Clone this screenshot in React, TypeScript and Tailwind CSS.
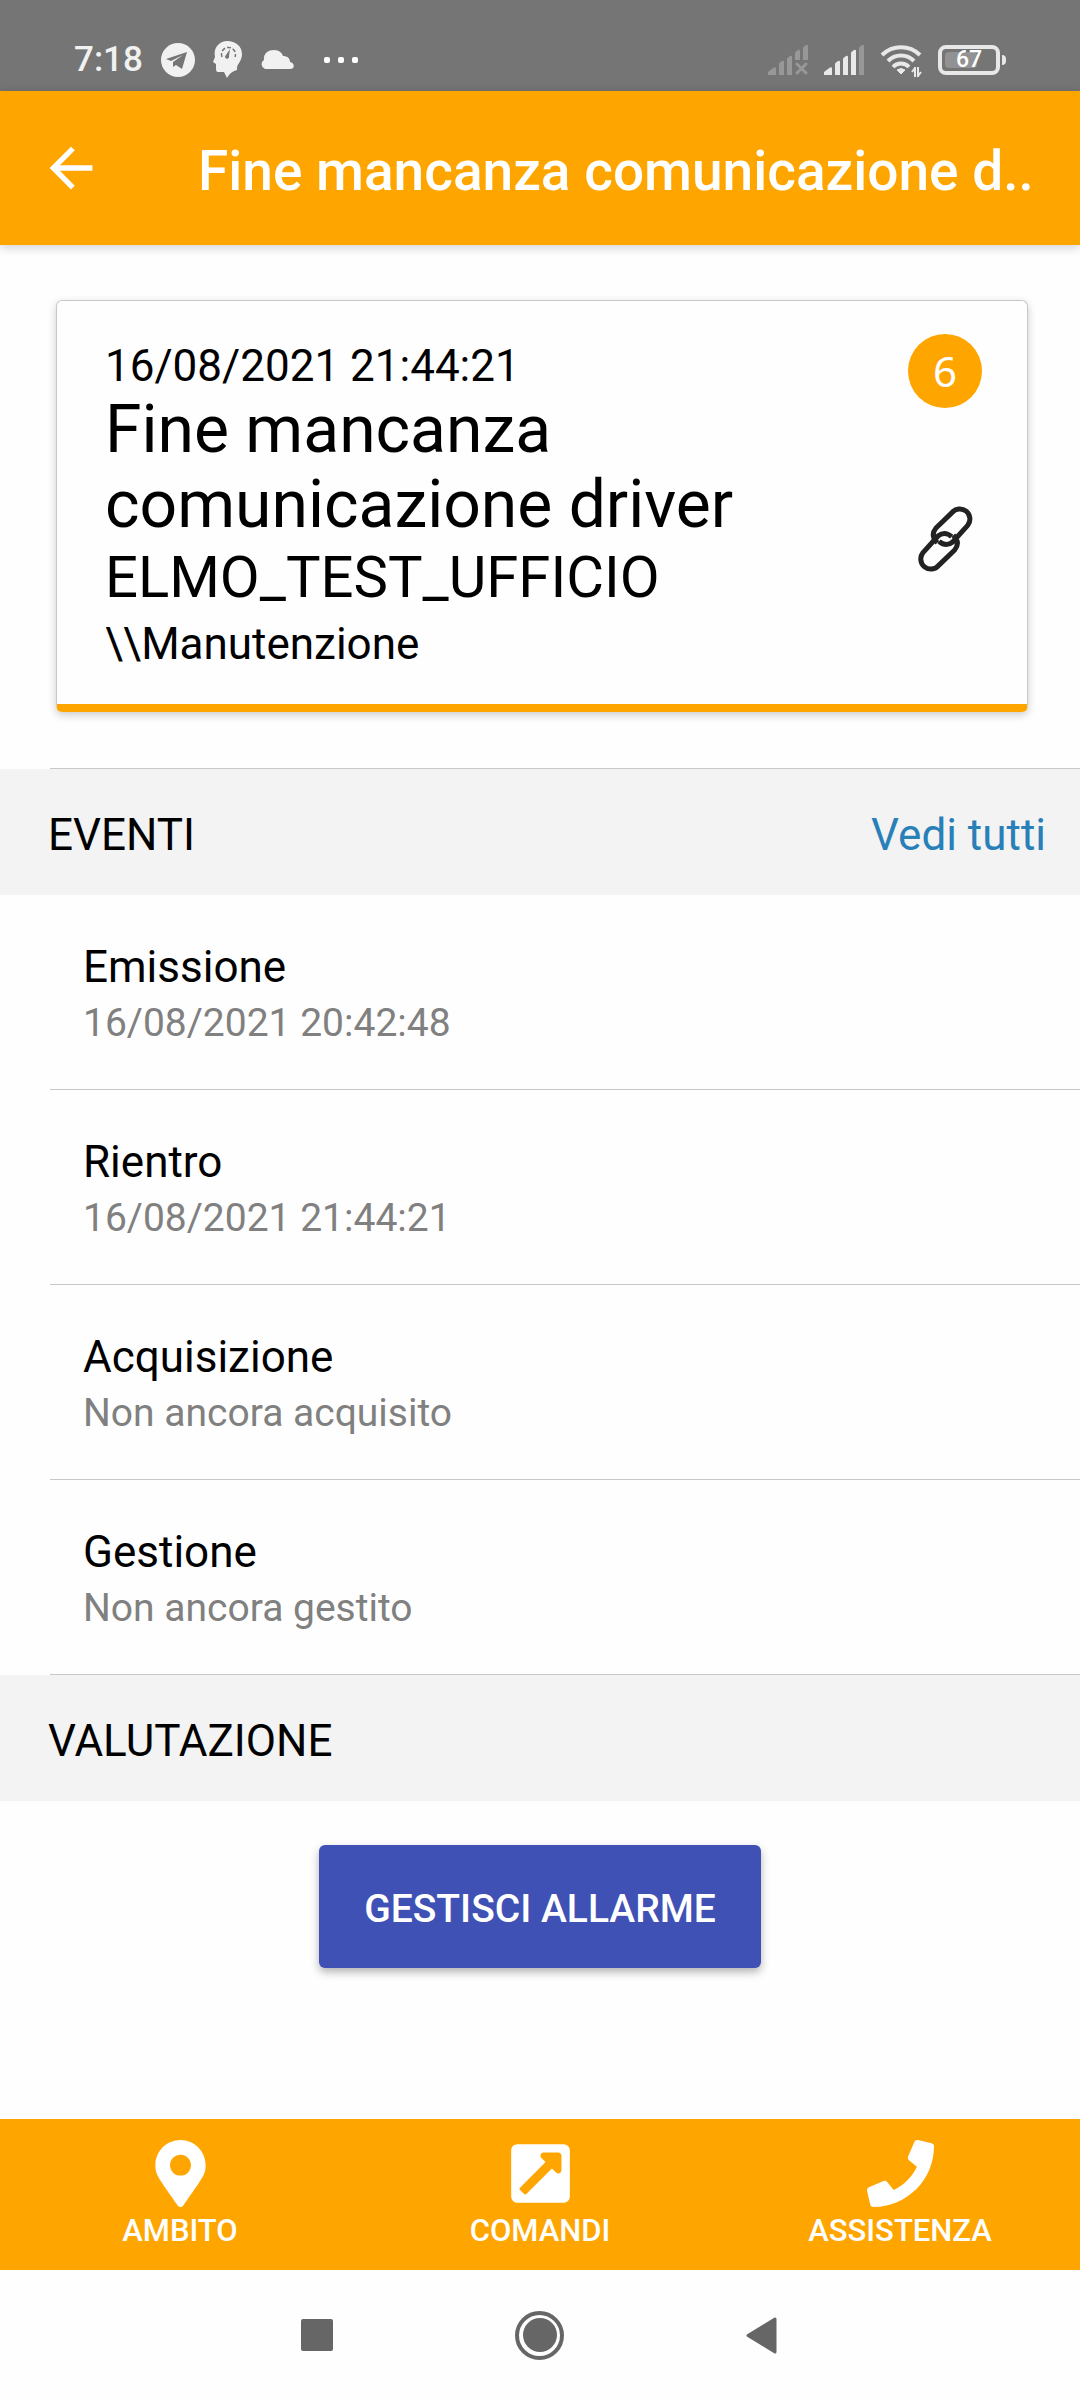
import { ReactNode } from "react";
import { FaExternalLinkSquareAlt, FaMapMarkerAlt, FaPhone } from "react-icons/fa";
import { IoMdArrowBack } from "react-icons/io";

const events = [
	{ label: "Emissione", value: "16/08/2021 20:42:48" },
	{ label: "Rientro", value: "16/08/2021 21:44:21" },
	{ label: "Acquisizione", value: "Non ancora acquisito" },
	{ label: "Gestione", value: "Non ancora gestito" },
];

const tabs = [
	{ label: "AMBITO", href: "#ambito", Icon: FaMapMarkerAlt },
	{ label: "COMANDI", href: "#comandi", Icon: FaExternalLinkSquareAlt },
	{ label: "ASSISTENZA", href: "#assistenza", Icon: FaPhone },
];

function SignalBars({ missing = false }: { missing?: boolean }) {
	return (
		<svg className="h-[30px] w-[40px]" viewBox="0 0 40 30" fill="#e8e8e8">
			<g opacity={missing ? 0.3 : 1}>
				<path d="M0 30v-3l6-4.500q2-1 2 1V30z" />
				<path d="M11 30V19q0-1 1-1.500l2-1.500q2-1 2 1V30z" />
				<path d="M19 30V14q0-1 1-1.500l2-1.500q2-1 2 1v18z" />
				<path d={missing ? "M27 15V8q0-1 1-1.500L30 5q2-1 2 1v9z" : "M27 30V8q0-1 1-1.500L30 5q2-1 2 1v24z"} />
			</g>
			<path
				opacity={0.3}
				d={missing ? "M35 15V3q0-1 1-1.500L38 0q2-1 2 1v14z" : "M35 30V3q0-1 1-1.500L38 0q2-1 2 1v29z"}
			/>
			{missing && (
				<path d="M29 19l9 9m0-9l-9 9" stroke="#e8e8e8" strokeWidth="3" strokeLinecap="round" opacity="0.3" />
			)}
		</svg>
	);
}

function StatusBar() {
	return (
		<div className="flex h-[91px] items-center justify-between bg-[#757575] pt-[28px] pr-[74px] pl-[74px] text-[#f1f1f1]">
			<div className="flex items-center">
				<span className="text-[35px] leading-none font-medium">7:18</span>
				<svg className="ml-[18px] size-[34px]" viewBox="0 0 34 34">
					<circle cx="17" cy="17" r="17" fill="#f1f1f1" />
					<path d="M5 16L26 9l-5 17-6-4-3 2 0-5 10-7-12 6z" fill="#757575" />
				</svg>
				<svg className="ml-[18px] h-[37px] w-[29px]" viewBox="0 0 29 37">
					<path
						d="M14.500 0C22 0 29 5 29 13c0 7-5 10-5 14v2c-4 1-7 3-10 8l-3-6H5q-2 0-2-3v-5l-3-2 2-5C0 7 6 0 14.500 0z"
						fill="#f1f1f1"
					/>
					<path d="M9 16a7 7 0 1 1 13 0" fill="none" stroke="#757575" strokeWidth="1.500" strokeDasharray="4 2" />
					<path d="M17 8l-4 6a2 2 0 1 0 3 1z" fill="#757575" />
				</svg>
				<svg className="ml-[18px] h-[19px] w-[34px]" viewBox="0 0 34 19">
					<path d="M5 19a5 5 0 0 1-1-9C3 4 8 0 14 0c5 0 8 3 9 6 4 0 7 2 7 6 5 1 5 7 0 7z" fill="#f1f1f1" />
				</svg>
				<div className="ml-[30px] flex gap-2">
					<span className="size-[6px] rounded-xs bg-white" />
					<span className="size-[6px] rounded-xs bg-white" />
					<span className="size-[6px] rounded-xs bg-white" />
				</div>
			</div>
			<div className="flex items-center gap-4">
				<SignalBars missing />
				<SignalBars />
				<svg className="h-[34px] w-[42px]" viewBox="0 0 42 34" fill="none" stroke="#e8e8e8" strokeWidth="4">
					<path d="M2 12a27 27 0 0 1 38 0M8 18a18 18 0 0 1 26 0M13 24a11 11 0 0 1 16 0" />
					<path d="M17 27q4-3 8 0l-4 4z" fill="#e8e8e8" strokeWidth="1" />
					<path d="M35 24v10m-3-5l3-4m3 9V24m3 5l-3 4" strokeWidth="2" />
				</svg>
				<div className="flex items-center gap-[2px]">
					<div className="relative flex h-[30px] w-[62px] items-center justify-center rounded-lg border-4 border-[#e8e8e8]">
						<span className="absolute top-[3px] left-[3px] h-4 w-[32px] rounded-sm bg-[#929292]" />
						<span className="relative text-[23px] leading-none font-medium text-white">67</span>
					</div>
					<span className="h-[10px] w-1 rounded-r bg-[#e8e8e8]" />
				</div>
			</div>
		</div>
	);
}

function LinkIcon() {
	const half = "M58 110Q36 88 54 66L102 20A29 29 0 0 1 149 58L104 108Q84 124 63 106";

	return (
		<svg
			className="h-[66px] w-[55px]"
			viewBox="0 0 165 198"
			fill="none"
			stroke="#222"
			strokeWidth="15"
			strokeLinejoin="round"
		>
			<path d={half} />
			<path d={half} transform="rotate(180 82 99)" />
		</svg>
	);
}

function SectionHeader({ title, children }: { title: string; children?: ReactNode }) {
	return (
		<div className="flex h-[126px] items-center justify-between bg-[#f3f3f3] pt-[6px] pr-[34px] pl-12">
			<h2>{title}</h2>
			{children}
		</div>
	);
}

export default function App() {
	return (
		<div className="flex min-h-screen flex-col bg-[#fefefe] font-[Roboto,sans-serif] text-[44px] leading-[52px] text-black">
			<StatusBar />
			<header className="flex h-[154px] items-center bg-[#ffa500] pr-10 pl-[39px] text-white shadow-[0_2px_10px_rgba(0,0,0,0.2)]">
				<button type="button" aria-label="Indietro" className="mr-[95px]">
					<IoMdArrowBack className="size-[64px]" />
				</button>
				<h1 className="truncate pt-[6px] text-[55px] leading-[64px] font-medium">Fine mancanza comunicazione d..</h1>
			</header>

			<main className="flex-1">
				<article className="mt-[55px] mr-[52px] mb-14 ml-14 flex justify-between rounded-md border border-b-8 border-[#c8c8c8] border-b-[#ffa500] pt-[33px] pr-[45px] pb-7 pl-12 shadow-[0_3px_8px_rgba(0,0,0,0.2)]">
					<div className="flex max-w-[680px] flex-col pt-[6px]">
						<p>16/08/2021 21:44:21</p>
						<h2 className="text-[66px] leading-[75px]">Fine mancanza comunicazione driver</h2>
						<p className="text-[58px] leading-[70px]">ELMO_TEST_UFFICIO</p>
						<p className="leading-[64px]">\\Manutenzione</p>
					</div>
					<div className="flex flex-col items-center gap-[98px]">
						<span className="flex size-[74px] items-center justify-center rounded-full bg-[#ffa500] font-['Noto_Sans',sans-serif] text-[42px] text-white">
							6
						</span>
						<LinkIcon />
					</div>
				</article>

				<section>
					<div className="ml-[50px] border-b border-[#c8c8c8]" />
					<SectionHeader title="EVENTI">
						<a href="#eventi" className="text-[#2980b9]">
							Vedi tutti
						</a>
					</SectionHeader>
					<ul>
						{events.map(({ label, value }) => (
							<li
								key={label}
								className="ml-[50px] flex h-[195px] flex-col justify-center gap-1 border-b border-[#c8c8c8] pt-[6px] pl-[33px]"
							>
								<h3>{label}</h3>
								<p className="text-[39px] text-[#808080]">{value}</p>
							</li>
						))}
					</ul>
				</section>

				<section>
					<SectionHeader title="VALUTAZIONE" />
					<div className="flex justify-center py-11">
						<button
							type="button"
							className="h-[123px] rounded-md bg-[#3f51b5] px-[45px] pt-1 text-[39px] font-medium text-white shadow-[0_4px_8px_rgba(0,0,0,0.3)]"
						>
							GESTISCI ALLARME
						</button>
					</div>
				</section>
			</main>

			<nav className="grid h-[151px] grid-cols-3 bg-[#ffa500] text-white">
				{tabs.map(({ label, href, Icon }) => (
					<a key={label} href={href} className="flex flex-col items-center pt-[21px]">
						<Icon className="size-[67px]" />
						<span className="mt-1 text-[31px] leading-[40px] font-medium">{label}</span>
					</a>
				))}
			</nav>

			<div className="flex h-[130px] items-center justify-center gap-[182px] pr-[2px]">
				<button type="button" aria-label="App recenti" className="size-8 rounded-xs bg-[#666]" />
				<button
					type="button"
					aria-label="Home"
					className="flex size-[49px] items-center justify-center rounded-full border-4 border-[#666]"
				>
					<span className="size-[34px] rounded-full bg-[#666]" />
				</button>
				<button type="button" aria-label="Indietro di sistema">
					<svg className="h-[37px] w-[31px]" viewBox="0 0 31 37">
						<path d="M2 18.500L29 2v33z" fill="#666" stroke="#666" strokeWidth="3" strokeLinejoin="round" />
					</svg>
				</button>
			</div>
		</div>
	);
}
